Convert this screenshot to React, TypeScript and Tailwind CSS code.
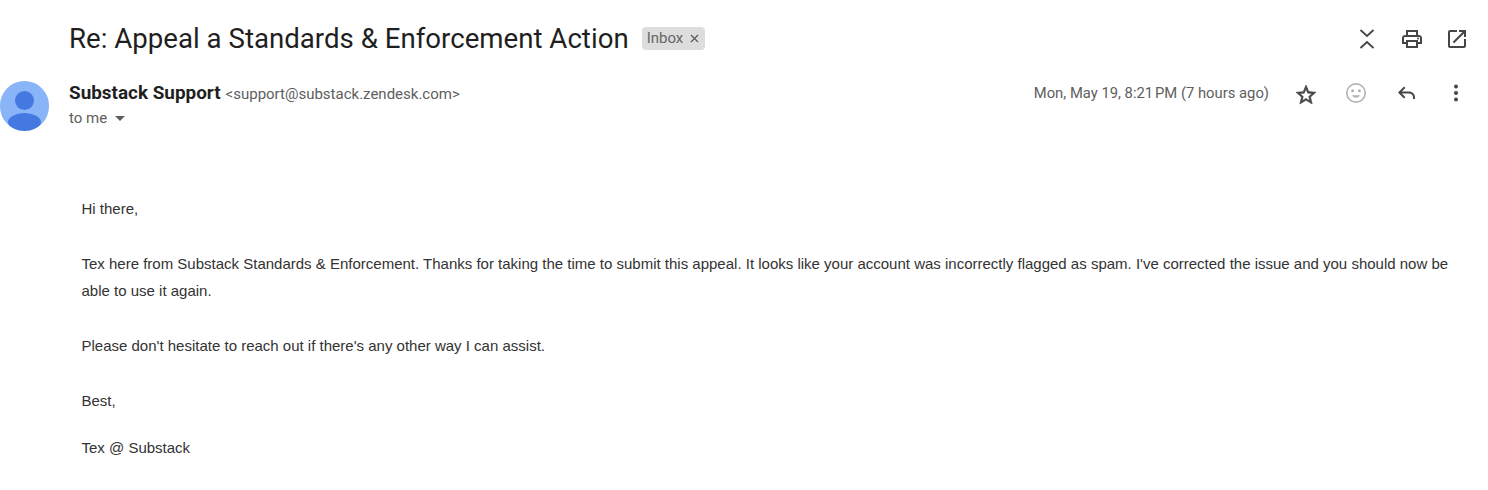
import { X } from "lucide-react";

const GOOGLE = { fontFamily: "Roboto, 'Noto Sans', sans-serif" };
const ARIAL = { fontFamily: "'Liberation Sans', Arial, sans-serif" };

function Collapse() {
  return (
    <svg width="24" height="24" viewBox="0 0 24 24" fill="none" stroke="#444746" strokeWidth="1.8">
      <path d="M5.500 3l6.500 6 6.500-6M5.500 21l6.500-6 6.500 6" />
    </svg>
  );
}

function Printer() {
  return (
    <svg width="24" height="24" viewBox="0 0 24 24" fill="#444746">
      <path d="M19 8h-1V3H6v5H5c-1.66 0-3 1.34-3 3v6h4v4h12v-4h4v-6c0-1.66-1.34-3-3-3zM8 5h8v3H8V5zm8 14H8v-4h8v4zm4-4h-2v-2H6v2H4v-4c0-.55.45-1 1-1h14c.55 0 1 .45 1 1v4z" />
      <circle cx="18" cy="11.5" r="1" />
    </svg>
  );
}

function OpenNew() {
  return (
    <svg width="24" height="24" viewBox="0 0 24 24" fill="#444746">
      <path d="M19 19H5V5h7V3H5a2 2 0 0 0-2 2v14a2 2 0 0 0 2 2h14c1.100 0 2-.9 2-2v-7h-2v7zM14 3v2h3.590l-9.830 9.830 1.410 1.410L19 6.410V10h2V3h-7z" />
    </svg>
  );
}

function StarIcon() {
  return (
    <svg width="24" height="24" viewBox="0 0 24 24" fill="#444746" stroke="#444746" strokeWidth="0.6" className="mt-[2px]">
      <path d="M22 9.240l-7.190-.62L12 2 9.190 8.630 2 9.240l5.460 4.730L5.820 21 12 17.270 18.180 21l-1.630-7.030L22 9.240zM12 15.400l-3.760 2.270 1-4.280-3.320-2.880 4.380-.38L12 6.100l1.710 4.040 4.380.38-3.320 2.880 1 4.280L12 15.400z" />
    </svg>
  );
}

function Smiley() {
  return (
    <svg width="24" height="24" viewBox="0 0 24 24" fill="none">
      <circle cx="12" cy="12" r="9.200" stroke="#b4b4b4" strokeWidth="1.700" />
      <circle cx="8.600" cy="9.800" r="1.400" fill="#a8a8a8" />
      <circle cx="15.400" cy="9.800" r="1.400" fill="#a8a8a8" />
      <path d="M7.800 14.200c1 1.700 2.500 2.500 4.200 2.500s3.200-.8 4.200-2.500z" fill="#b4b4b4" />
    </svg>
  );
}

function Reply() {
  return (
    <svg width="24" height="24" viewBox="0 0 24 24" fill="#444746" className="-mt-[1px]">
      <path d="M21 17.500V19h-2v-1.500c0-2.500-1.700-4-4.300-4H7.800l3.600 3.600L10 18.500 4 12.500l6-6 1.400 1.400-3.600 3.600h6.900c3.800 0 6.300 2.400 6.300 6z" />
    </svg>
  );
}

function MoreVert() {
  return (
    <svg width="24" height="24" viewBox="0 0 24 24" fill="#444746">
      <circle cx="12" cy="5.500" r="2" />
      <circle cx="12" cy="12" r="2" />
      <circle cx="12" cy="18.500" r="2" />
    </svg>
  );
}

function Avatar() {
  return (
    <div className="relative h-[50px] w-[49px] shrink-0 overflow-hidden rounded-full bg-[#8ab4f8]">
      <div className="absolute left-[15px] top-[10px] h-[19px] w-[19px] rounded-full bg-[#4479e1]" />
      <div className="absolute left-[8px] top-[32px] h-[18px] w-[33px] rounded-[50%] bg-[#4479e1]" />
    </div>
  );
}

export default function App() {
  return (
    <div className="h-[490px] w-[1488px] overflow-hidden bg-white">
      <div className="flex h-[81px] items-start pl-[69px] pr-[19px] pt-[21px]">
        <h1 className="text-[27.65px] leading-[36px] text-[#1f1f1f]" style={GOOGLE}>
          Re: Appeal a Standards &amp; Enforcement Action
        </h1>
        <span
          className="ml-[13px] mt-[6px] flex h-[23px] w-[63px] items-center gap-[5px] rounded-[4px] bg-[#dddddd] pl-[5px] text-[15px] text-[#666666]"
          style={GOOGLE}
        >
          Inbox
          <X className="h-[13px] w-[13px] text-[#555555]" strokeWidth={2} />
        </span>
        <div className="ml-auto mt-[6px] flex w-[114px] items-center justify-between">
          <Collapse />
          <Printer />
          <OpenNew />
        </div>
      </div>

      <div className="flex items-start pr-[20px]">
        <Avatar />
        <div className="ml-[20px] flex-1 pt-[2px]">
          <div className="flex h-[22px] items-baseline">
            <span className="text-[18.9px] font-bold leading-[20px] text-[#1f1f1f]" style={GOOGLE}>
              Substack Support
            </span>
            <span className="ml-[5px] text-[15px] leading-[20px] text-[#5e5e5e]" style={GOOGLE}>
              &lt;support@substack.zendesk.com&gt;
            </span>
          </div>
          <div className="mt-[3px] flex h-[20px] items-center text-[15px] text-[#5e5e5e]" style={GOOGLE}>
            to me
            <span className="ml-[8px] h-0 w-0 border-x-[5.5px] border-t-[5.5px] border-x-transparent border-t-[#5e5e5e]" />
          </div>
        </div>
        <div className="flex items-start">
          <span className="mr-[25px] text-[14.8px] leading-[24px] text-[#5e5e5e]" style={GOOGLE}>
            Mon, May 19, 8:21{"\u202f"}PM (7 hours ago)
          </span>
          <div className="flex w-[174px] items-start justify-between">
            <StarIcon />
            <Smiley />
            <Reply />
            <MoreVert />
          </div>
        </div>
      </div>

      <div className="pl-[81.5px] pr-[30px] pt-[64px] text-[15px] leading-[27px] text-[#333333]" style={ARIAL}>
        <p>Hi there,</p>
        <p className="mt-[28px]">
          Tex here from Substack Standards &amp; Enforcement. Thanks for taking the time to submit this appeal. It looks
          like your account was incorrectly flagged as spam. I've corrected the issue and you should now be able to use
          it again.
        </p>
        <p className="mt-[28px]">Please don't hesitate to reach out if there's any other way I can assist.</p>
        <p className="mt-[28px]">Best,</p>
        <p className="mt-[20px]">Tex @ Substack</p>
      </div>
    </div>
  );
}
